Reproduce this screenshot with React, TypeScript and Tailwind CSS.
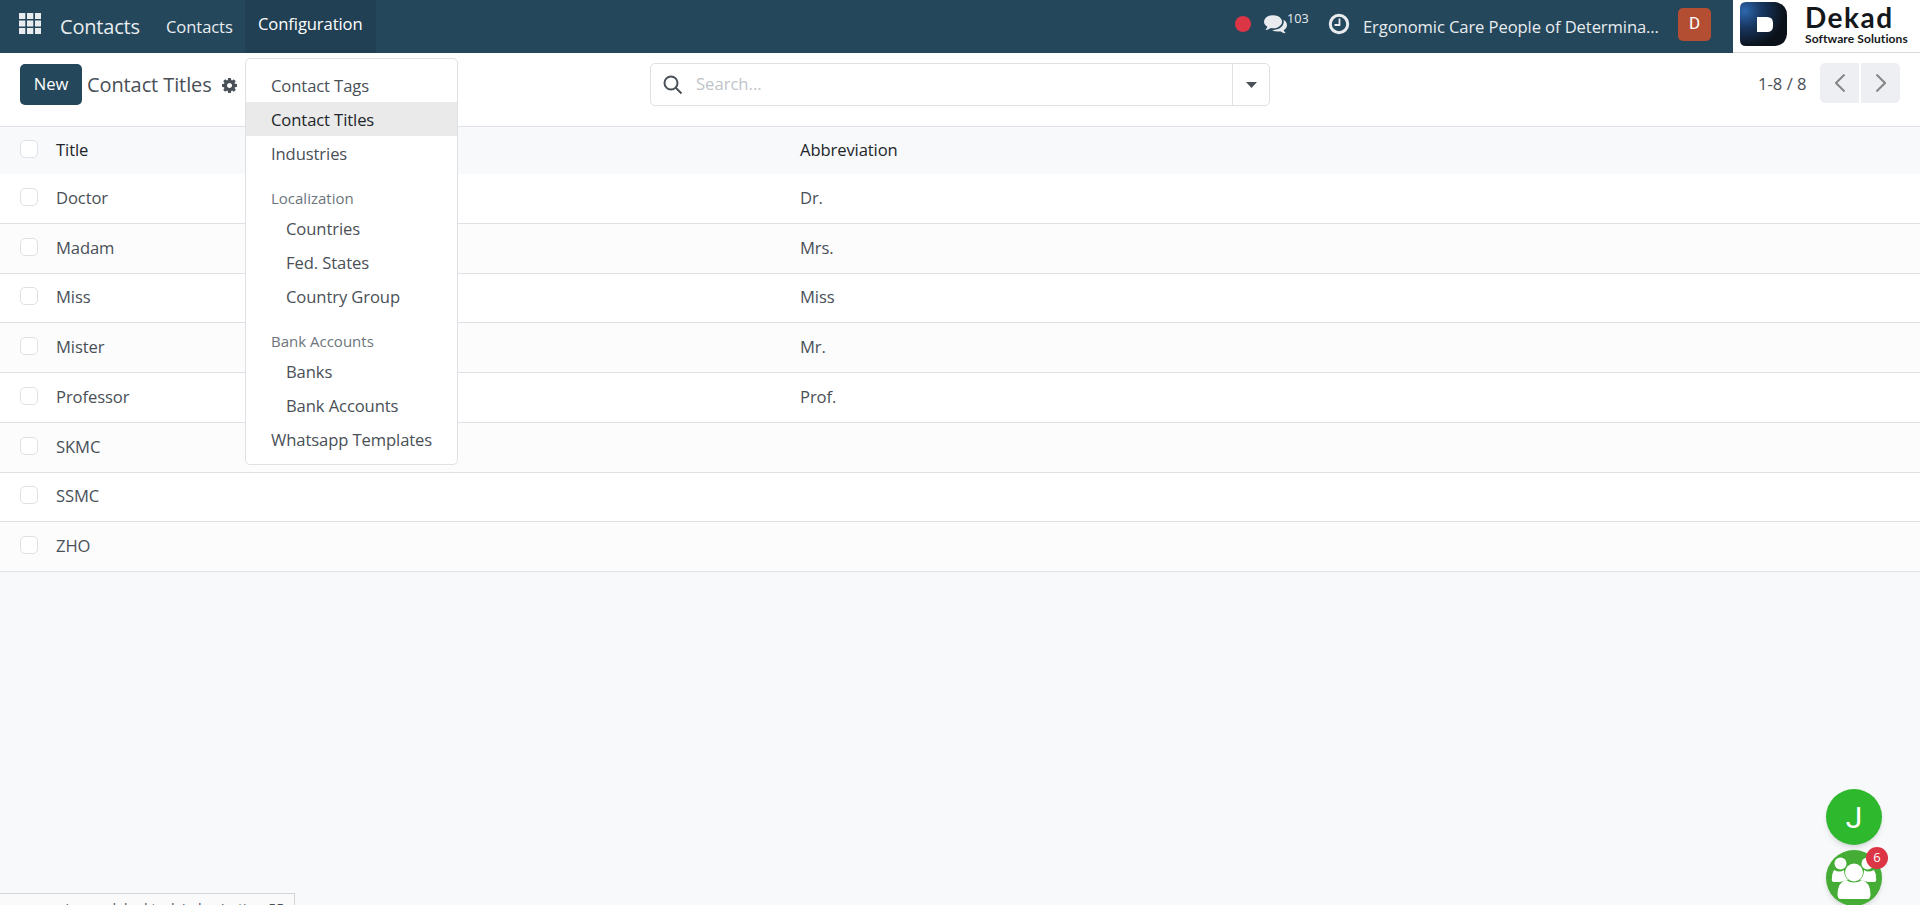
import type { ReactNode } from "react";

type Title = {
  name: string;
  abbreviation: string;
};

const titles: Title[] = [
  { name: "Doctor", abbreviation: "Dr." },
  { name: "Madam", abbreviation: "Mrs." },
  { name: "Miss", abbreviation: "Miss" },
  { name: "Mister", abbreviation: "Mr." },
  { name: "Professor", abbreviation: "Prof." },
  { name: "SKMC", abbreviation: "" },
  { name: "SSMC", abbreviation: "" },
  { name: "ZHO", abbreviation: "" },
];

function Gear() {
  return (
    <svg viewBox="0 0 1536 1536" className="size-[15px] fill-[#495057]">
      <path d="M1024 768q0-106-75-181t-181-75-181 75-75 181 75 181 181 75 181-75 75-181zm512-109v222q0 12-8 23t-20 13l-185 28q-19 54-39 91 35 50 107 138 10 12 10 25t-9 23q-27 37-99 108t-94 71q-12 0-26-9l-138-108q-44 23-91 38-16 136-29 186-7 28-36 28H657q-14 0-24.500-8.500T621 1506l-28-184q-49-16-90-37l-141 107q-10 9-25 9-14 0-25-11-126-114-165-168-7-10-7-23 0-12 8-23 15-21 51-66.500t54-70.500q-27-50-41-99L29 913q-13-2-21-12.500T0 877V655q0-12 8-23t19-13l186-28q14-46 39-92-40-57-107-138-10-12-10-24 0-10 9-23 26-36 98.500-107.500T337 135q13 0 26 10l138 107q44-23 91-38 16-136 29-186 7-28 36-28h222q14 0 24.500 8.500T915 30l28 184q49 16 90 37l142-107q9-9 24-9 13 0 25 10 129 119 165 170 7 8 7 22 0 12-8 23-15 21-51 66.500t-54 70.500q26 50 41 98l183 28q13 2 21 12.500t8 23.500z" />
    </svg>
  );
}

function Comments() {
  return (
    <svg viewBox="0 0 1792 1536" className="h-[20px] w-[23px] fill-[#e9ecef]">
      <path d="M1408 512q0 139-94 257t-256.500 186.500T704 1024q-86 0-176-16-124 88-278 128-36 9-86 16h-3q-11 0-20.500-8t-11.500-21q-1-3-1-6.500t.5-6.500 2-6l2.500-5 3.500-5.500 4-5 4.500-5 4-4.500q5-6 23-25t26-29.500 22.500-29 25-38.500 20.500-44q-124-72-195-177T0 512q0-139 94-257T350.500 68.500 704 0t353.500 68.500T1314 255t94 257zm384 256q0 120-71 224.500T1526 1169q10 24 20.500 44t25 38.500 22.500 29 26 29.500 23 25q1 1 4 4.500t4.500 5 4 5 3.500 5.500l2.500 5 2 6 .5 6.500-1 6.500q-3 14-13 22t-22 7q-50-7-86-16-154-40-278-128-90 16-176 16-271 0-472-132 58 4 88 4 161 0 309-45t264-129q125-92 192-212t67-254q0-77-23-152 129 71 204 178t75 230z" />
    </svg>
  );
}

function Navbar() {
  return (
    <header className="flex h-[53px] shrink-0 items-center bg-[#24475b] text-[#e9ecef]">
      <svg viewBox="0 0 22 21" className="ml-[19px] h-[21px] w-[22px] -translate-y-[3px] fill-[#e9ecef]">
        {[0, 8, 16].map((x) =>
          [0, 7.5, 15].map((y) => (
            <rect key={`${x}-${y}`} x={x} y={y} width="6.300" height="6" />
          ))
        )}
      </svg>
      <div className="ml-[19px] w-[106px] text-[20px] leading-[50px] tracking-[-0.2px]">
        Contacts
      </div>
      <div className="w-[79px] text-[16.600px] leading-[50px] tracking-[-0.1px]">Contacts</div>
      <div className="h-[53px] w-[131px] bg-[#224054] pl-[13px] text-[16.600px] leading-[48px] tracking-[-0.1px] text-white">
        Configuration
      </div>
      <div className="ml-auto flex h-[53px] items-center">
        <div className="mb-[6px] size-4 rounded-full bg-[#dc3545]" />
        <div className="mb-[4px] ml-[13px]">
          <Comments />
        </div>
        <div className="mb-[15px] w-[41px] text-[12.600px]">103</div>
        <svg viewBox="0 0 22 22" className="mb-[5px] size-[22px] fill-none stroke-[#e9ecef]">
          <circle cx="11" cy="11" r="8.700" strokeWidth="3" />
          <path d="M11.500 5.500v6.500h-5" strokeWidth="1.800" />
        </svg>
        <div className="ml-[13px] w-[315px] text-[16.600px] leading-[50px] tracking-[-0.1px] whitespace-nowrap">
          Ergonomic Care People of Determina...
        </div>
        <div className="mb-[5px] flex size-[33px] items-center justify-center rounded-[5px] bg-[#b34e32] font-[Roboto] text-[17px] text-white">
          D
        </div>
        <Brand />
      </div>
    </header>
  );
}

function Brand() {
  return (
    <div className="ml-[22px] flex h-[53px] w-[187px] border-b border-[#d8dadd] bg-white text-[#14181b]">
      <svg viewBox="0 0 48 45" className="mt-[2px] ml-[7px] h-[45px] w-[48px]">
        <defs>
          <radialGradient id="brand" cx="0.1" cy="0.2" r="0.850">
            <stop offset="0" stopColor="#2d67ad" />
            <stop offset="0.450" stopColor="#17365f" />
            <stop offset="1" stopColor="#0b1118" />
          </radialGradient>
        </defs>
        <path
          d="M6 0h29q12 2 12 13v19q-1 11-12 12H6q-6 0-6-6V6q0-6 6-6z"
          fill="url(#brand)"
        />
        <path d="M17 15h10q6 0 6 6v3q0 6-6 6H17z" fill="#fff" />
      </svg>
      <div className="ml-[17px] flex flex-col whitespace-nowrap">
        <span className="mt-[3px] font-[Lato] text-[28px] leading-[29px] font-bold tracking-[1.500px]">
          Dekad
        </span>
        <span className="font-[Lato] text-[12px] leading-[14px] font-bold tracking-[0.1px]">
          Software Solutions
        </span>
      </div>
    </div>
  );
}

function ControlPanel() {
  return (
    <div className="flex h-[74px] shrink-0 items-start border-b border-[#dee2e6] bg-white pt-[10px] pl-5">
      <button className="mt-px h-[41px] w-[62px] rounded-[5px] bg-[#24475b] text-[16.600px] text-white">
        New
      </button>
      <div className="ml-[5px] w-[135px] text-[20px] leading-[44px] tracking-[-0.1px] whitespace-nowrap">
        Contact Titles
      </div>
      <div className="mt-[15px] w-[428px]">
        <Gear />
      </div>
      <div className="flex h-[43px] w-[620px] items-center rounded-[5px] border border-[#dee2e6]">
        <svg viewBox="0 0 20 20" className="ml-3 size-5 fill-none stroke-[#495057] stroke-2">
          <circle cx="8" cy="8" r="6.500" />
          <path d="M12.500 12.500l6 6" />
        </svg>
        <span className="ml-[13px] flex-1 text-[16.600px] text-[#c0c4c9]">Search...</span>
        <div className="flex h-full w-[37px] items-center justify-center border-l border-[#dee2e6]">
          <svg viewBox="0 0 11 6" className="h-[6px] w-[11px] fill-[#495057]">
            <path d="M0 0h11L5.500 6z" />
          </svg>
        </div>
      </div>
      <div className="ml-auto w-[62px] text-[16.600px] leading-[42px]">1-8 / 8</div>
      <div className="mr-5 flex gap-[2px]">
        <div className="flex h-10 w-[39px] items-center justify-center rounded-l-[5px] bg-[#eeeff2]">
          <svg viewBox="0 0 10 18" className="h-[18px] w-[10px] fill-none stroke-[#868686] stroke-2">
            <path d="M9.500 0.500L1 9l8.500 8.500" />
          </svg>
        </div>
        <div className="flex h-10 w-[39px] items-center justify-center rounded-r-[5px] bg-[#eeeff2]">
          <svg viewBox="0 0 10 18" className="h-[18px] w-[10px] fill-none stroke-[#868686] stroke-2">
            <path d="M0.500 0.500L9 9l-8.500 8.500" />
          </svg>
        </div>
      </div>
    </div>
  );
}

function Checkbox() {
  return <div className="mr-[18px] mb-[3px] size-[18px] rounded-[5px] border border-[#dee2e6] bg-white" />;
}

function TitleList() {
  return (
    <div className="text-[16.600px] tracking-[-0.1px]">
      <div className="flex h-[47px] items-center pl-5 text-[#212529]">
        <Checkbox />
        <div className="w-[744px]">Title</div>
        <div>Abbreviation</div>
      </div>
      {titles.map((t) => (
        <div
          key={t.name}
          className="flex h-[49.750px] items-center border-b border-[#dee2e6] bg-white pl-5 even:bg-white odd:bg-[#fcfcfc]"
        >
          <Checkbox />
          <div className="w-[744px]">{t.name}</div>
          <div>{t.abbreviation}</div>
        </div>
      ))}
    </div>
  );
}

function MenuItem({ children, active, nested }: { children: ReactNode; active?: boolean; nested?: boolean }) {
  return (
    <div
      className={`h-[34px] text-[16.600px] leading-[36px] tracking-[-0.1px] ${nested ? "pl-[40px]" : "pl-[25px]"} ${
        active ? "bg-[#eaeaea] text-[#212529]" : ""
      }`}
    >
      {children}
    </div>
  );
}

function MenuHeader({ children }: { children: ReactNode }) {
  return (
    <div className="h-[41px] pt-[16px] pl-[25px] text-[15px] leading-[24px] text-[#6c757d]">
      {children}
    </div>
  );
}

function ConfigurationMenu() {
  return (
    <div className="absolute top-[58px] left-[245px] h-[407px] w-[213px] rounded-[5px] border border-[#dee2e6] bg-white pt-[9px]">
      <MenuItem>Contact Tags</MenuItem>
      <MenuItem active>Contact Titles</MenuItem>
      <MenuItem>Industries</MenuItem>
      <MenuHeader>Localization</MenuHeader>
      <MenuItem nested>Countries</MenuItem>
      <MenuItem nested>Fed. States</MenuItem>
      <MenuItem nested>Country Group</MenuItem>
      <MenuHeader>Bank Accounts</MenuHeader>
      <MenuItem nested>Banks</MenuItem>
      <MenuItem nested>Bank Accounts</MenuItem>
      <MenuItem>Whatsapp Templates</MenuItem>
    </div>
  );
}

function ChatBubbles() {
  return (
    <div className="absolute top-[789px] left-[1826px] flex flex-col gap-[5px]">
      <div className="flex size-14 items-center justify-center rounded-full bg-[#2eb82e] font-[Roboto] text-[30px] text-white shadow-md">
        J
      </div>
      <div className="relative size-14 rounded-full bg-[#45ad35] shadow-md">
        <svg viewBox="0 0 56 56" className="size-14 fill-white">
          <circle cx="14.500" cy="13.500" r="6" />
          <circle cx="41.500" cy="13.500" r="6" />
          <path d="M8 20q6 3 10 0 0 6 4 10-5 1-8 2H8q-3 0-2-4 0-5 2-8zM48 20q-6 3-10 0 0 6-4 10 5 1 8 2h6q3 0 2-4 0-5-2-8z" />
          <circle cx="28" cy="22.500" r="9" />
          <path d="M20 30q8 5 16 0 8 2 8.500 14 0 5-3 5h-27q-3 0-3-5Q12 32 20 30z" />
        </svg>
        <span className="absolute -top-[3px] left-10 flex size-[22px] items-center justify-center rounded-full bg-[#dc3545] text-[13px] text-white">
          6
        </span>
      </div>
    </div>
  );
}

export default function App() {
  return (
    <div className="relative flex h-[905px] w-[1920px] flex-col overflow-hidden bg-[#f8f9fa] font-['Open_Sans',sans-serif] text-[#495057]">
      <Navbar />
      <ControlPanel />
      <TitleList />
      <ConfigurationMenu />
      <ChatBubbles />
      <div className="absolute top-[893px] left-0 h-6 w-[295px] border-t border-r border-[#d3d5d8] bg-[#fafafa] pt-[5px] pl-[6px] text-[14px] leading-[20px] whitespace-nowrap">
        ergonomiccare.dekad.tech/odoo/action-55
      </div>
    </div>
  );
}
